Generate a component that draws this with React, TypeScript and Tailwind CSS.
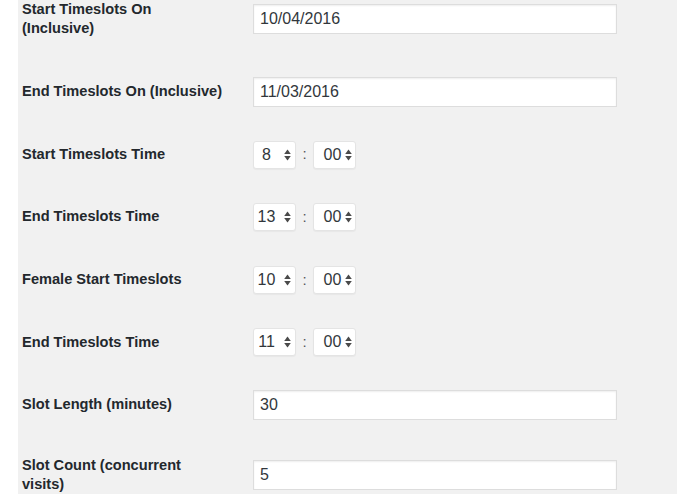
import React from "react";

const font = { fontFamily: '"Liberation Sans", Arial, sans-serif' };

function Arrows() {
  return (
    <svg width="7" height="12" viewBox="0 0 7 12" className="shrink-0">
      <path d="M3.5 0.5 L6.8 5 L0.2 5 Z" fill="#4a4a4a" />
      <path d="M3.5 11.5 L6.8 7 L0.2 7 Z" fill="#4a4a4a" />
    </svg>
  );
}

function SelH({ v }: { v: string }) {
  return (
    <div className="flex h-[28px] w-[43px] items-center rounded-[3px] border border-[#e4e4e4] bg-white pl-[2px] shadow-[0_1px_1px_rgba(0,0,0,0.04)]">
      <span className="w-[21px] text-center text-[16px] text-[#32373c]">{v}</span>
      <span className="ml-[7px] flex items-center">
        <Arrows />
      </span>
    </div>
  );
}

function SelM({ v }: { v: string }) {
  return (
    <div className="flex h-[28px] w-[43px] items-center rounded-[3px] border border-[#e4e4e4] bg-white pl-[8px] shadow-[0_1px_1px_rgba(0,0,0,0.04)]">
      <span className="w-[21px] text-center text-[16px] text-[#32373c]">{v}</span>
      <span className="ml-[2px] flex items-center">
        <Arrows />
      </span>
    </div>
  );
}

function Time({ h, m }: { h: string; m: string }) {
  return (
    <div className="flex items-center">
      <SelH v={h} />
      <span className="w-[17px] text-center text-[15px] text-[#555]">:</span>
      <SelM v={m} />
    </div>
  );
}

function Input({ v }: { v: string }) {
  return (
    <div className="flex h-[30px] w-[364px] items-center border border-[#dddddd] bg-white px-[6px] text-[16px] text-[#32373c] shadow-[inset_0_1px_2px_rgba(0,0,0,0.07)]">
      {v}
    </div>
  );
}

function Row({ label, h, children }: { label: React.ReactNode; h: string; children: React.ReactNode }) {
  return (
    <div className={"flex shrink-0 items-center " + h}>
      <div className="w-[235px] pl-[4px] text-[14.6px] font-bold leading-[19.5px] text-[#23282d]">{label}</div>
      <div>{children}</div>
    </div>
  );
}

export default function App() {
  return (
    <div className="h-[494px] w-[695px] overflow-hidden bg-white" style={font}>
      <div className="ml-[18px] flex h-full w-[659px] flex-col bg-[#f1f1f1]">
        <div className="mt-[-22.7px] flex flex-col">
          <Row h="h-[83.4px]" label={<><span className="block">Start Timeslots On</span><span className="block">(Inclusive)</span></>}>
            <Input v="10/04/2016" />
          </Row>
          <Row h="h-[62.6px]" label="End Timeslots On (Inclusive)">
            <Input v="11/03/2016" />
          </Row>
          <Row h="h-[62.6px]" label="Start Timeslots Time">
            <Time h="8" m="00" />
          </Row>
          <Row h="h-[62.6px]" label="End Timeslots Time">
            <Time h="13" m="00" />
          </Row>
          <Row h="h-[62.6px]" label="Female Start Timeslots">
            <Time h="10" m="00" />
          </Row>
          <Row h="h-[62.6px]" label="End Timeslots Time">
            <Time h="11" m="00" />
          </Row>
          <Row h="h-[62.6px]" label="Slot Length (minutes)">
            <Input v="30" />
          </Row>
          <Row h="h-[78.4px]" label={<><span className="block">Slot Count (concurrent</span><span className="block">visits)</span></>}>
            <Input v="5" />
          </Row>
        </div>
      </div>
    </div>
  );
}
